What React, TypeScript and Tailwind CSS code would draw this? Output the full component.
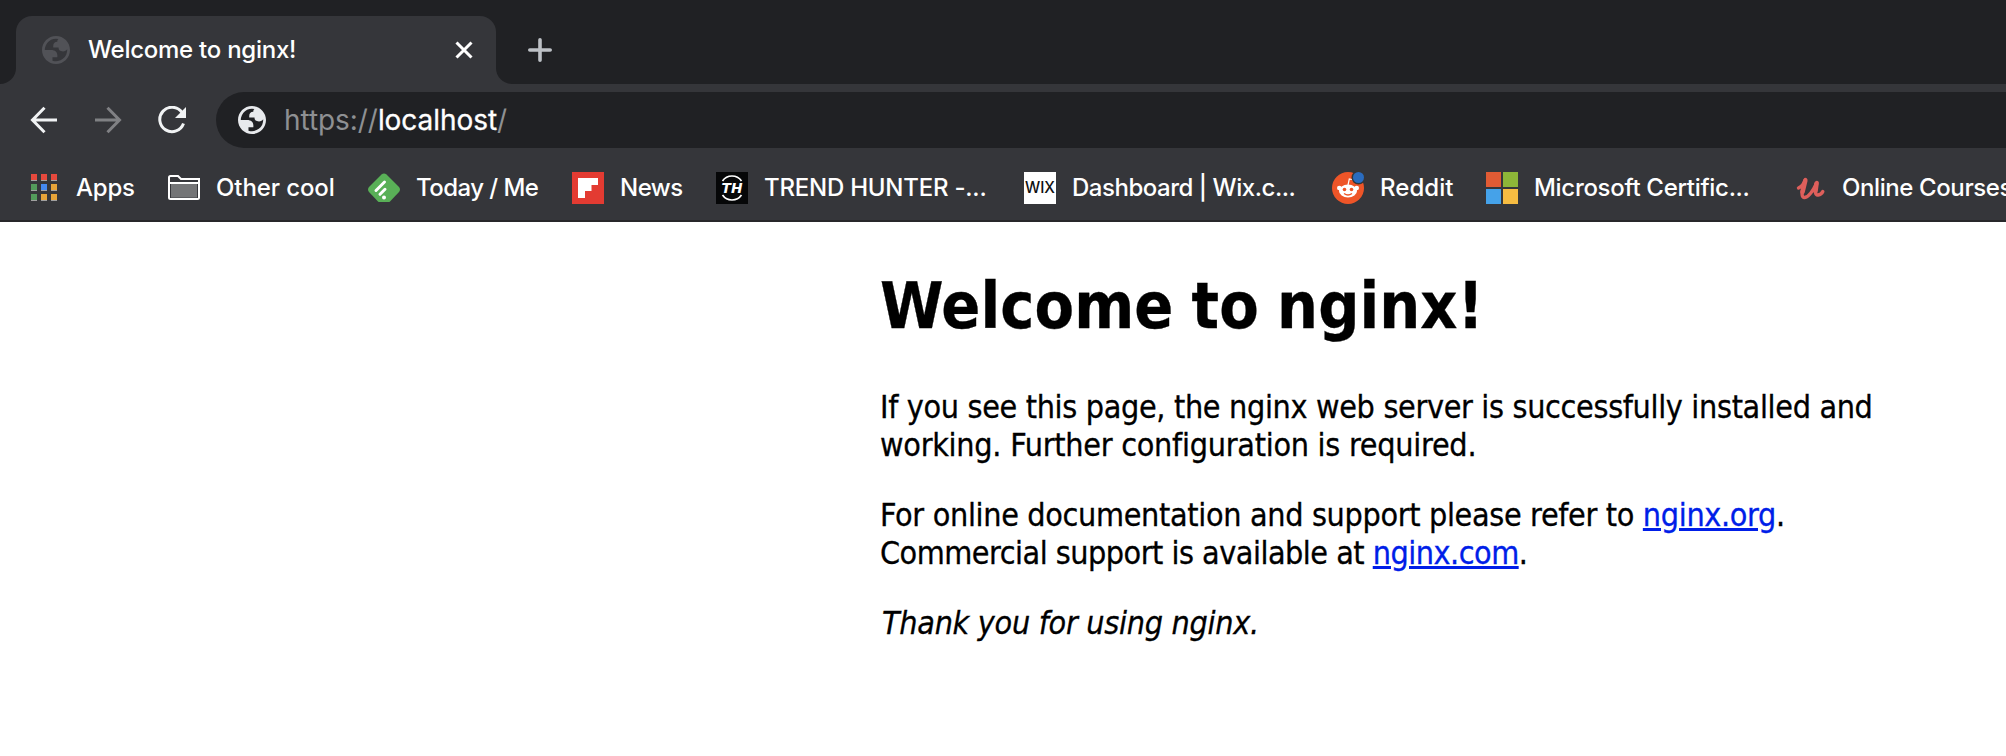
import React from "react";

type Mark = { icon: React.ReactNode; label: string; text: string; slot: string };

function Globe({ className }: { className: string }) {
  return (
    <svg viewBox="2 2 20 20" className={className} fill="currentColor" fillRule="evenodd">
      <path d="M12 2C6.480 2 2 6.480 2 12s4.480 10 10 10 10-4.480 10-10S17.520 2 12 2zM4 12h4.400c3.407.022 4.922 1.730 4.543 5.127H9.488v2.470a8.004 8.004 0 0 0 10.498-8.083C19.327 12.504 18.332 13 17 13c-2.137 0-3.206-.916-3.206-2.750h-3.748c-.274-2.728.683-4.092 2.870-4.092 0-.975.327-1.597.811-1.970A8 8 0 0 0 4 12z" />
    </svg>
  );
}

const icons = {
  apps: (
    <svg viewBox="0 0 32 32" className="size-8">
      {["#e5493d", "#e5493d", "#e5493d", "#539b5b", "#4489f0", "#e6a338", "#539b5b", "#e6a338", "#e6a338"].map((c, i) => (
        <g key={i}>
          <rect x={3 + (i % 3) * 10} y={2 + Math.floor(i / 3) * 10} width="6" height="7" fill="#a0a0a0" />
          <rect x={3 + (i % 3) * 10} y={2 + Math.floor(i / 3) * 10} width="6" height="6" fill={c} />
        </g>
      ))}
    </svg>
  ),
  folder: (
    <svg viewBox="0 0 32 32" className="size-8">
      <path d="M3 12H29V25H3Z" fill="#747577" />
      <path d="M3 25H29V26H3Z" fill="#5a5b5e" />
      <path d="M1 5.500Q1 4 2.500 4H10L13 7H31V25.500Q31 27 29.500 27H2.500Q1 27 1 25.500ZM1 11H31" fill="none" stroke="#fff" strokeWidth="2" />
    </svg>
  ),
  feedly: (
    <svg viewBox="0 0 32 32" className="size-8">
      <path d="M13.500 2.500Q16 .5 18.500 2.500L31 15Q33 17.500 31 20L22 29.500Q21.500 30 20.500 30H11.500Q10.500 30 10 29.500L1 20Q-1 17.500 1 15Z" fill="#59b057" />
      <path d="M8 18.500L16.500 10M12 22.300L17 17.300" stroke="#fff" strokeWidth="3" strokeLinecap="round" />
      <circle cx="16" cy="25.500" r="2" fill="#fff" />
    </svg>
  ),
  flip: (
    <svg viewBox="0 0 32 32" className="size-8">
      <rect width="32" height="32" fill="#e33b32" />
      <path d="M6 6H26V13H19.500V19H13V26H6Z" fill="#fff" />
    </svg>
  ),
  trend: (
    <svg viewBox="0 0 32 32" className="size-8">
      <rect width="32" height="32" fill="#060708" />
      <path d="M6.500 9A11.500 11.500 0 0 1 25.500 9M6.500 23A11.500 11.500 0 0 0 25.500 23" fill="none" stroke="#fff" strokeWidth="1.700" />
      <text x="16" y="21" textAnchor="middle" textLength="21" lengthAdjust="spacingAndGlyphs" fontFamily="DejaVu Sans" fontWeight="bold" fontStyle="oblique" fontSize="14" fill="#fff">TH</text>
    </svg>
  ),
  wix: (
    <svg viewBox="0 0 32 32" className="size-8">
      <rect width="32" height="32" fill="#fff" />
      <text x="16" y="21" textAnchor="middle" textLength="30" lengthAdjust="spacingAndGlyphs" fontFamily="Inter" fontWeight="500" fontSize="15.500" fill="#111">WIX</text>
    </svg>
  ),
  reddit: (
    <svg viewBox="0 0 32 32" className="size-8">
      <circle cx="16" cy="16" r="16" fill="#ee5528" />
      <circle cx="7.300" cy="16" r="2.300" fill="#fff" />
      <circle cx="24.700" cy="16" r="2.300" fill="#fff" />
      <ellipse cx="16" cy="19" rx="9" ry="6.500" fill="#fff" />
      <path d="M16 13L17.300 7L22 8" fill="none" stroke="#fff" strokeWidth="1.200" />
      <circle cx="12.500" cy="17.500" r="1.800" fill="#ee5528" />
      <circle cx="19.500" cy="17.500" r="1.800" fill="#ee5528" />
      <path d="M12 21.500Q16 24.500 20 21.500" fill="none" stroke="#ee5528" strokeWidth="1.300" />
      <circle cx="26.500" cy="5.500" r="7" fill="#35363a" />
      <circle cx="26.500" cy="5.500" r="5.500" fill="#2a6cbf" />
    </svg>
  ),
  ms: (
    <svg viewBox="0 0 32 32" className="size-8">
      <path d="M0 0H15V15H0Z" fill="#e15b34" />
      <path d="M17 0H32V15H17Z" fill="#8db638" />
      <path d="M0 17H15V32H0Z" fill="#45a2e9" />
      <path d="M17 17H32V32H17Z" fill="#f6bc42" />
    </svg>
  ),
  udemy: (
    <svg viewBox="0 0 32 32" className="size-8">
      <path d="M2.500 16Q7.500 13.500 9.500 7.500Q3.500 25 8 25.500Q13.500 26 21 10.500Q17.500 23.500 22 23Q25.500 22.500 26.800 19.500" fill="none" stroke="#de5f5b" strokeWidth="3.400" strokeLinecap="round" strokeLinejoin="round" />
      <path d="M9.300 8.500L6.500 20M20.500 11.500L19.500 19" fill="none" stroke="#de5f5b" strokeWidth="4.600" strokeLinecap="round" />
    </svg>
  ),
};

const marks: Mark[] = [
  { icon: icons.apps, label: "Apps", text: "tracking-[-0.2px]", slot: "w-[140px]" },
  { icon: icons.folder, label: "Other cool", text: "tracking-[-0.1px]", slot: "w-[200px]" },
  { icon: icons.feedly, label: "Today / Me", text: "tracking-[-0.55px]", slot: "w-[204px]" },
  { icon: icons.flip, label: "News", text: "tracking-[-0.5px]", slot: "w-[144px]" },
  { icon: icons.trend, label: "TREND HUNTER -...", text: "tracking-[-0.23px]", slot: "w-[308px]" },
  { icon: icons.wix, label: "Dashboard | Wix.c...", text: "tracking-[-0.47px]", slot: "w-[308px]" },
  { icon: icons.reddit, label: "Reddit", text: "tracking-[0.05px]", slot: "w-[154px]" },
  { icon: icons.ms, label: "Microsoft Certific...", text: "tracking-[-0.3px]", slot: "w-[310px]" },
  { icon: icons.udemy, label: "Online Courses", text: "-ml-0.5 tracking-[-0.4px]", slot: "w-[240px]" },
];

export default function App() {
  return (
    <div className="flex h-[756px] w-[2006px] flex-col overflow-hidden bg-white font-['Inter',sans-serif] text-white">
      <header className="flex h-[84px] shrink-0 items-end bg-[#202124]">
        <svg viewBox="0 0 16 16" className="size-4 shrink-0"><path d="M16 0V16H0A16 16 0 0 0 16 0Z" fill="#35363a" /></svg>
        <div className="flex h-[68px] w-[480px] shrink-0 items-center rounded-t-2xl bg-[#35363a] pl-[26px] pr-[23px]">
          <Globe className="size-7 text-[#515257]" />
          <span className="ml-[18px] flex-1 whitespace-nowrap text-2xl font-medium tracking-[-0.26px]">Welcome to nginx!</span>
          <svg viewBox="0 0 18 18" className="size-[18px]"><path d="M1.500 1.500L16.500 16.500M16.500 1.500L1.500 16.500" stroke="#fff" strokeWidth="3" /></svg>
        </div>
        <svg viewBox="0 0 16 16" className="size-4 shrink-0"><path d="M0 0V16H16A16 16 0 0 1 0 0Z" fill="#35363a" /></svg>
        <svg viewBox="0 0 24 24" className="mb-[22px] ml-4 size-6"><path d="M12 1.800V22.200M1.800 12H22.200" stroke="#bdc1c6" strokeWidth="3.600" strokeLinecap="round" /></svg>
      </header>
      <div className="flex h-[72px] shrink-0 items-start bg-[#35363a] pt-2">
        <div className="flex h-14 w-[216px] shrink-0 items-center">
          <svg viewBox="0 0 28 28" className="ml-[30px] size-7" fill="none" stroke="#f1f3f4" strokeWidth="3"><path d="M27 14H3M14.500 1.800L2.500 14L14.500 26.200" /></svg>
          <svg viewBox="0 0 28 28" className="ml-[36px] size-7" fill="none" stroke="#808184" strokeWidth="3"><path d="M1 14H25M13.500 1.800L25.500 14L13.500 26.200" /></svg>
          <svg viewBox="0 0 28 28" className="ml-[36px] size-7" fill="none"><path d="M24 6.500A12.200 12.200 0 1 0 25.500 17.500" stroke="#f1f3f4" strokeWidth="3" /><path d="M28 1V12H17Z" fill="#f1f3f4" /></svg>
        </div>
        <div className="flex h-14 flex-1 items-center rounded-l-full bg-[#202124] pl-[22px]">
          <Globe className="size-7 text-[#e8eaed]" />
          <span className="ml-[18px] whitespace-nowrap text-[28px] tracking-[-0.06px] text-[#8e9093]">https://<span className="text-white [-webkit-text-stroke:0.3px]">localhost</span>/</span>
        </div>
      </div>
      <nav className="flex h-[66px] shrink-0 items-center overflow-hidden border-b-2 border-[#28272a] bg-[#35363a] pl-7">
        {marks.map((m) => (
          <div key={m.label} className={`${m.slot} flex shrink-0 items-center gap-4 whitespace-nowrap text-2xl font-medium`}>
            {m.icon}
            <span className={m.text}>{m.label}</span>
          </div>
        ))}
      </nav>
      <main className="ml-[880px] w-[1120px] whitespace-nowrap font-['DejaVu_Sans_Condensed','DejaVu_Sans',sans-serif] text-[32px] leading-[38px] text-black [-webkit-text-stroke:0.3px]">
        <h1 className="mt-[45px] text-[64px] font-bold leading-[78px] tracking-[0.1px] [word-spacing:-2px]">Welcome to nginx!</h1>
        <p className="mt-[43px]">
          <span className="block tracking-[-0.33px]">If you see this page, the nginx web server is successfully installed and</span>
          <span className="block tracking-[-0.26px]">working. Further configuration is required.</span>
        </p>
        <p className="mt-8">
          <span className="block tracking-[-0.33px]">For online documentation and support please refer to <a className="text-[#001ee8] underline">nginx.org</a>.</span>
          <span className="block tracking-[-0.5px]">Commercial support is available at <a className="text-[#001ee8] underline">nginx.com</a>.</span>
        </p>
        <p className="ml-0.5 mt-8 italic tracking-[-0.28px]">Thank you for using nginx.</p>
      </main>
    </div>
  );
}
